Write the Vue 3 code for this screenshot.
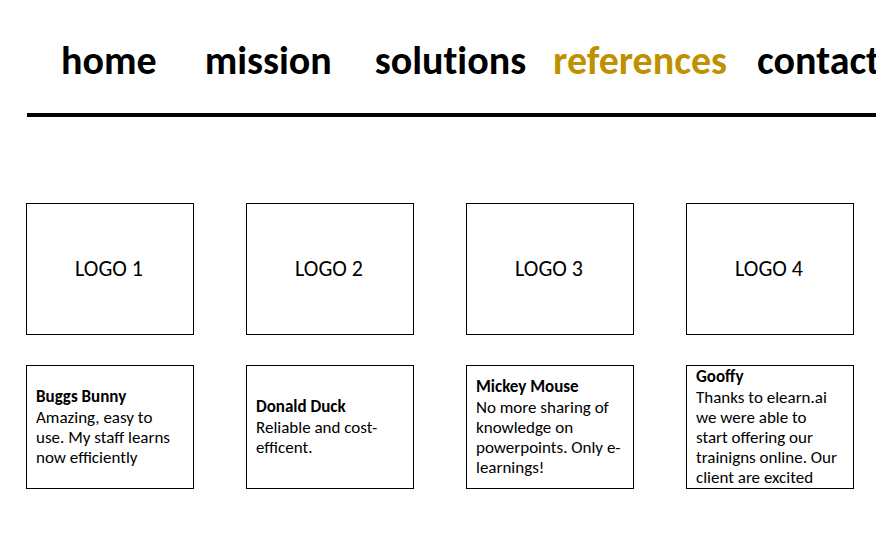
<script setup>
const links = ['home', 'mission', 'solutions', 'references', 'contact']
const references = [
  { logo: 'LOGO 1', name: 'Buggs Bunny', lines: ['Amazing, easy to', 'use. My staff learns', 'now efficiently'] },
  { logo: 'LOGO 2', name: 'Donald Duck', lines: ['Reliable and cost-', 'efficent.'] },
  { logo: 'LOGO 3', name: 'Mickey Mouse', lines: ['No more sharing of', 'knowledge on', 'powerpoints. Only e-', 'learnings!'] },
  { logo: 'LOGO 4', name: 'Gooffy', lines: ['Thanks to elearn.ai', 'we were able to', 'start offering our', 'trainigns online. Our', 'client are excited'] }
]
</script>

<template>
  <div class="page">
    <header>
      <nav>
        <a v-for="link in links" :key="link" :class="[link, { active: link === 'references' }]" :href="'#' + link">{{ link }}</a>
      </nav>
    </header>
    <main>
      <article v-for="item in references" :key="item.logo">
        <div class="logo">{{ item.logo }}</div>
        <div class="quote">
          <h2>{{ item.name }}</h2>
          <p><span v-for="line in item.lines" :key="line">{{ line }}</span></p>
        </div>
      </article>
    </main>
  </div>
</template>

<style>
body {
  background: #fff;
}
</style>

<style scoped>
.page {
  overflow: hidden;
  font-family: Calibri, Carlito, Lato, sans-serif;
  color: #000;
}
header {
  margin-left: 27px;
  padding: 37px 0 28px 34px;
  border-bottom: 4px solid #000;
}
nav {
  display: flex;
  align-items: center;
}
nav a {
  flex: none;
  color: #000;
  font-size: 40px;
  font-weight: 700;
  font-variant-ligatures: none;
  line-height: 48px;
  text-decoration: none;
}
.home {
  margin-right: 48px;
}
.mission {
  margin-right: 43px;
}
.solutions {
  margin-right: 27px;
}
.references {
  margin-right: 30px;
}
nav a.active {
  color: #bf9000;
}
main {
  display: grid;
  grid-template-columns: repeat(4, 1fr);
  gap: 52px;
  margin: 86px 22px 0 26px;
}
article {
  display: grid;
  gap: 30px;
  min-width: 0;
}
.logo,
.quote {
  box-sizing: border-box;
  display: flex;
  border: 1px solid #000;
}
.logo {
  align-items: center;
  justify-content: center;
  min-height: 132px;
  padding: 0 2px 2px 0;
  font-size: 22px;
}
.quote {
  flex-direction: column;
  justify-content: center;
  gap: 1px;
  min-height: 124px;
  padding: 0 9px;
  font-size: 17px;
  line-height: 20px;
}
h2,
p {
  margin: 0;
  font-size: inherit;
}
p span {
  display: block;
  white-space: nowrap;
}
</style>
